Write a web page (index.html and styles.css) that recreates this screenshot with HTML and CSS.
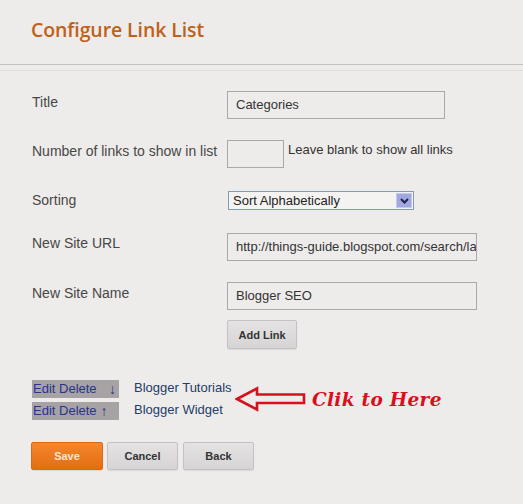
FILE: index.html
```html
<!DOCTYPE html>
<html>
<head>
<meta charset="utf-8">
<link rel="stylesheet" href="styles.css">
</head>
<body>
<div class="page">
  <header class="head">
    <h1 class="title">Configure Link List</h1>
  </header>
  <div class="sep"></div>
  <form class="form">
    <div class="row r-title">
      <label class="lbl">Title</label>
      <div class="field"><div class="input w-title">Categories</div></div>
    </div>
    <div class="row r-num">
      <label class="lbl">Number of links to show in list</label>
      <div class="field num-field"><div class="input w-num"></div><span class="hint">Leave blank to show all links</span></div>
    </div>
    <div class="row r-sort">
      <label class="lbl">Sorting</label>
      <div class="field">
        <div class="select"><span class="sel-text">Sort Alphabetically</span><span class="sel-btn"><svg width="9" height="6" viewBox="0 0 9 6"><path d="M1 1 L4.5 4.5 L8 1" fill="none" stroke="#1e2250" stroke-width="2"/></svg></span></div>
      </div>
    </div>
    <div class="row r-url">
      <label class="lbl">New Site URL</label>
      <div class="field"><div class="input w-url">http://things-guide.blogspot.com/search/label</div></div>
    </div>
    <div class="row r-name">
      <label class="lbl">New Site Name</label>
      <div class="field"><div class="input w-url">Blogger SEO</div></div>
    </div>
    <div class="row r-add">
      <span class="lbl"></span>
      <div class="field"><button type="button" class="btn add">Add Link</button></div>
    </div>
  </form>
  <div class="links">
    <div class="link-row">
      <div class="ed">Edit Delete<span class="arr down">↓</span></div>
      <span class="link-name">Blogger Tutorials</span>
      <div class="callout">
        <svg class="arrow" width="72" height="26" viewBox="0 0 72 26"><path d="M2 13 L22 2.5 L22 8.5 L69 8.5 L69 17 L22 17 L22 23.5 Z" fill="none" stroke="#d8101c" stroke-width="2.6" stroke-linejoin="miter"/></svg>
        <span class="clik">Clik to Here</span>
      </div>
    </div>
    <div class="link-row">
      <div class="ed">Edit Delete<span class="arr up">↑</span></div>
      <span class="link-name">Blogger Widget</span>
    </div>
  </div>
  <div class="actions">
    <button type="button" class="btn save">Save</button>
    <button type="button" class="btn">Cancel</button>
    <button type="button" class="btn">Back</button>
  </div>
</div>
</body>
</html>
```

FILE: styles.css
```css
html, body {
  margin: 0;
  padding: 0;
  background: #eeecea;
}
body {
  font-family: "Liberation Sans", Arial, sans-serif;
  color: #444;
  width: 523px;
  height: 504px;
  overflow: hidden;
}
.head {
  height: 64px;
  display: flex;
  align-items: center;
  padding-left: 31px;
  border-bottom: 1px solid #c4c0bf;
}
.title {
  margin: 0;
  margin-top: -5px;
  font-family: "Open Sans", sans-serif;
  font-weight: 600;
  font-size: 19.5px;
  letter-spacing: -0.1px;
  color: #bf6119;
}
.sep {
  height: 5px;
  border-bottom: 1px solid #e2dedc;
}
.form {
  padding-left: 32px;
  margin-top: 20px;
}
.row {
  display: flex;
  align-items: flex-start;
}
.lbl {
  width: 195px;
  font-size: 14px;
  line-height: 16px;
  color: #474747;
  flex: none;
}
.field {
  display: flex;
  align-items: flex-start;
}
.input {
  box-sizing: border-box;
  height: 28px;
  border: 1px solid #aaa8a8;
  background: #eeecea;
  font-size: 13px;
  line-height: 26px;
  padding-left: 8px;
  color: #333;
  white-space: nowrap;
  overflow: hidden;
}
.w-title { width: 218px; }
.w-num { width: 57px; }
.w-url { width: 250px; }
.hint {
  font-size: 13px;
  margin-left: 4px;
  margin-top: 2px;
  color: #333;
}
.r-title .lbl { padding-top: 3px; }
.r-num { margin-top: 21px; }
.r-num .lbl { padding-top: 3px; }
.r-sort { margin-top: 23px; }
.r-sort .lbl { padding-top: 1px; }
.r-url { margin-top: 23px; }
.r-url .lbl { padding-top: 2px; }
.r-name { margin-top: 21px; }
.r-name .lbl { padding-top: 3px; }
.r-add { margin-top: 10px; }

.select {
  margin-left: 1px;
  box-sizing: border-box;
  width: 186px;
  height: 19px;
  border: 1px solid #7f9db9;
  background: #f4f3f1;
  display: flex;
  align-items: center;
  justify-content: space-between;
}
.sel-text {
  font-size: 13px;
  color: #222;
  padding-left: 4px;
}
.sel-btn {
  width: 16px;
  height: 15px;
  margin-right: 1px;
  background: #a2a8de;
  border: 1px solid #c4c8ee;
  box-sizing: border-box;
  display: flex;
  align-items: center;
  justify-content: center;
}

.btn {
  box-sizing: border-box;
  height: 28px;
  width: 71px;
  border: 1px solid #c4c2c2;
  border-radius: 2px;
  background: linear-gradient(#e4e2e2, #d6d4d4);
  font-family: "Liberation Sans", Arial, sans-serif;
  font-weight: bold;
  font-size: 11px;
  color: #333;
  padding: 0;
  box-shadow: 0 1px 1px rgba(0,0,0,0.08);
}
.add {
  width: 70px;
  height: 29px;
}

.links {
  margin-top: 30px;
  padding-left: 32px;
}
.link-row {
  display: flex;
  align-items: center;
  height: 19px;
  margin-bottom: 3px;
}
.ed {
  box-sizing: border-box;
  width: 87px;
  height: 18px;
  background: #a7a2a3;
  color: #26368a;
  font-size: 13px;
  line-height: 18px;
  padding-left: 1px;
  display: flex;
  flex: none;
}
.arr {
  font-size: 14px;
}
.down { margin-left: auto; margin-right: 3px; }
.up { margin-left: 4px; }
.link-name {
  margin-left: 15px;
  font-size: 13px;
  color: #223d6a;
  width: 100px;
  flex: none;
  margin-top: -3px;
}
.callout {
  display: flex;
  align-items: center;
  margin-left: 1px;
  margin-top: 21px;
}
.arrow { flex: none; }
.clik {
  margin-left: 5px;
  font-family: "DejaVu Serif", serif;
  font-style: italic;
  font-weight: bold;
  font-size: 18.5px;
  color: #d8101c;
  letter-spacing: 0.3px;
}

.actions {
  margin-top: 22px;
  padding-left: 31px;
  display: flex;
  gap: 4px;
}
.save {
  width: 72px;
  background: linear-gradient(#f4862c, #e56d12);
  border-color: #d86a1a;
  color: #fde6cc;
}
.actions .btn:last-child { margin-left: 1px; }
```
